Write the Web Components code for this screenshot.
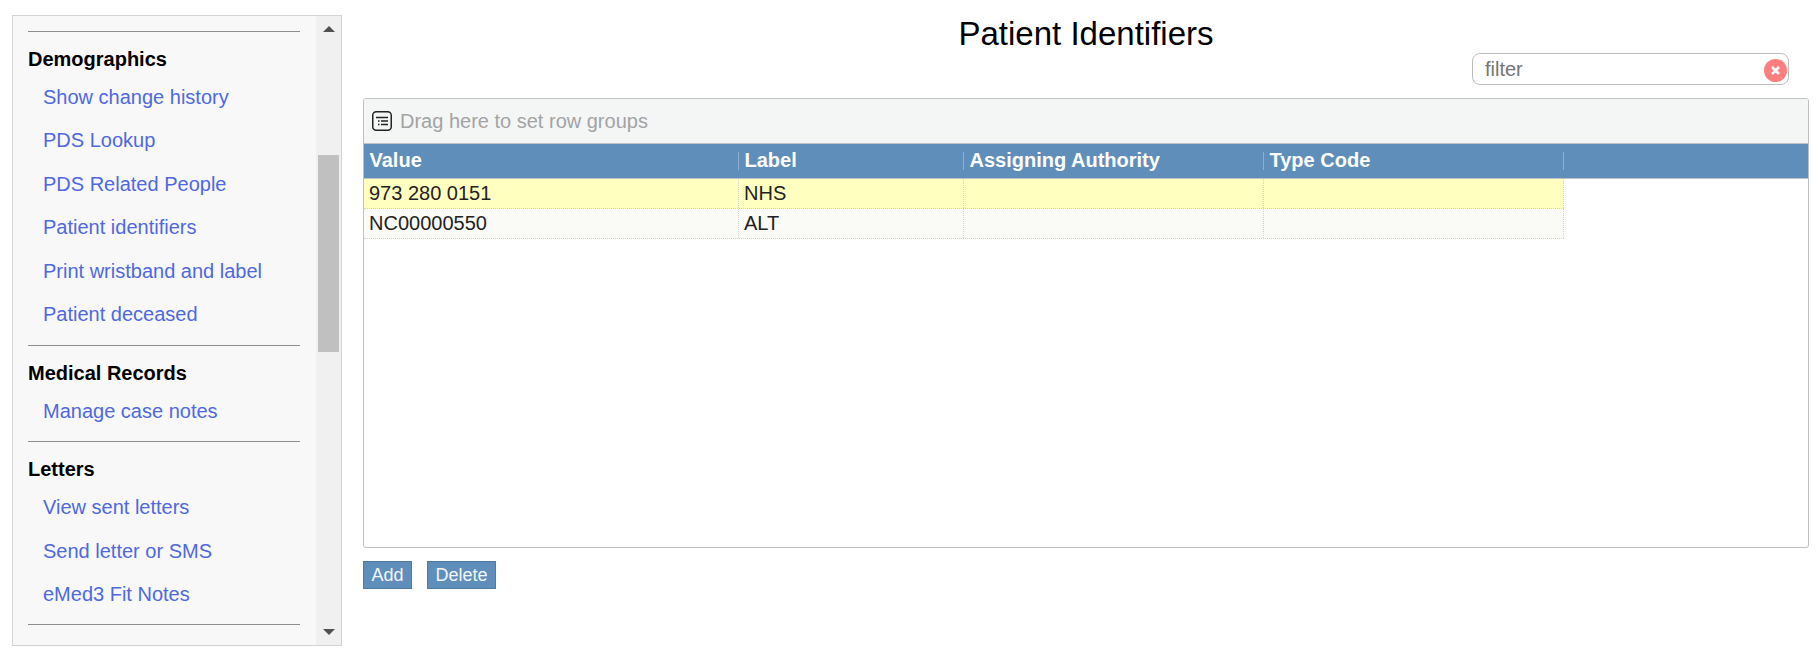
<!DOCTYPE html>
<html lang="en">
<head>
<meta charset="utf-8">
<title>Patient Identifiers</title>
<style>
  html, body { margin: 0; height: 100%; background: #fff; }
  body { font-family: "Liberation Sans", Arial, sans-serif; }
</style>
</head>
<body>

<template id="page-shell-tpl">
  <style>
    :host {
      display: flex;
      box-sizing: border-box;
      width: 1818px;
      height: 652px;
      padding: 15px 9px 6px 12px;
      gap: 21px;
      align-items: stretch;
      overflow: hidden;
    }
    main { flex: 1; min-width: 0; margin-top: -15px; display: flex; flex-direction: column; }
  </style>
  <slot name="side"></slot>
  <main><slot></slot></main>
</template>

<template id="side-menu-tpl">
  <style>
    :host {
      display: flex;
      box-sizing: border-box;
      width: 330px;
      flex: none;
      border: 1px solid #d3d3d3;
      background: #f8f8f8;
      overflow: hidden;
    }
    .items { flex: 1; min-width: 0; padding: 15px 16px 0 15px; }
    .bar {
      width: 25px;
      flex: none;
      background: #f0f0f0;
      display: flex;
      flex-direction: column;
      align-items: center;
      padding: 0 2px;
      box-sizing: border-box;
    }
    .arrow { width: 0; height: 0; border-left: 6px solid transparent; border-right: 6px solid transparent; }
    .up { border-bottom: 6px solid #505050; margin-top: 10px; }
    .thumb { align-self: stretch; height: 197px; margin-top: 123px; background: #c0c0c0; }
    .down { border-top: 6px solid #505050; margin-top: auto; margin-bottom: 10px; }
  </style>
  <div class="items"><slot></slot></div>
  <div class="bar">
    <div class="arrow up"></div>
    <div class="thumb"></div>
    <div class="arrow down"></div>
  </div>
</template>

<template id="menu-section-tpl">
  <style>
    :host { display: block; border-top: 1px solid #8e8e8e; padding: 15px 0 8.2px 0; font-size: 20px; }
    h3 { margin: 0; font: bold 20px/25px "Liberation Sans", Arial, sans-serif; color: #000; }
    .links { padding: 4px 0 0 0; display: flex; flex-direction: column; }
  </style>
  <h3></h3>
  <div class="links"><slot></slot></div>
</template>

<template id="menu-link-tpl">
  <style>
    :host {
      display: block;
      padding-left: 15px;
      height: 43.4px;
      line-height: 43.4px;
      font-size: 20px;
      color: #4f69e0;
      white-space: nowrap;
    }
  </style>
  <slot></slot>
</template>

<template id="filter-box-tpl">
  <style>
    :host {
      display: flex;
      align-items: center;
      box-sizing: border-box;
      width: 317px;
      height: 32px;
      border: 1px solid #bdbdbd;
      border-radius: 8px;
      background: #fff;
      padding: 0 1px 0 12px;
      font-size: 20px;
      color: #757575;
    }
    span { flex: 1; }
    svg { display: block; margin-top: 2px; }
  </style>
  <span>filter</span>
  <svg width="23" height="23" viewBox="0 0 23 23">
    <circle cx="11.5" cy="11.5" r="11.5" fill="#ff7f7f"/>
    <path d="M8 8l7 7M15 8l-7 7" stroke="#fff" stroke-width="2.6" fill="none"/>
  </svg>
</template>

<template id="id-grid-tpl">
  <style>
    :host {
      display: flex;
      flex-direction: column;
      box-sizing: border-box;
      height: 450px;
      border: 1px solid #bdc3c7;
      border-radius: 3px;
      background: #fff;
      font-size: 20px;
      color: #222;
      overflow: hidden;
    }
    .groups {
      display: flex;
      align-items: center;
      gap: 8px;
      flex: none;
      height: 45px;
      box-sizing: border-box;
      padding-left: 8px;
      background: #f4f6f6;
      border-bottom: 1px solid #bdc3c7;
      color: #a3a3a3;
    }
    .head, .row { display: grid; grid-template-columns: 375px 225px 300px 300px; }
    .head {
      flex: none;
      height: 35px;
      box-sizing: border-box;
      background: #608eba;
      border-bottom: 1px solid #bdc3c7;
      color: #fff;
      font-weight: bold;
      padding-top: 8px;
    }
    .head div {
      height: 18px;
      line-height: 17px;
      padding-left: 5.5px;
      border-right: 1px solid #8fb0cf;
      box-sizing: border-box;
    }
    .row { height: 30px; width: 1200px; box-sizing: border-box; border-bottom: 1px dotted #cfd4d0; }
    .row div {
      line-height: 29px;
      padding-left: 5px;
      border-right: 1px dotted #cfd4d0;
      box-sizing: border-box;
    }
    .row.odd { background: #ffffbf; }
    .row.even { background: #fafbf6; }
  </style>
  <div class="groups">
    <svg width="20" height="20" viewBox="0 0 20 20" fill="none">
      <rect x="0.75" y="0.75" width="18.5" height="18.5" rx="3.5" stroke="#222" stroke-width="1.5"/>
      <path d="M4 6.5h12M6 10h1.5M6 13.5h1.5" stroke="#222" stroke-width="1.6"/>
      <path d="M9 10h7M9 13.5h7" stroke="#222" stroke-width="1.6"/>
    </svg>
    <span>Drag here to set row groups</span>
  </div>
  <div class="head" part="head">
    <div>Value</div><div>Label</div><div>Assigning Authority</div><div>Type Code</div>
  </div>
  <div class="body"></div>
</template>

<template id="action-button-tpl">
  <style>
    :host {
      display: inline-block;
      box-sizing: border-box;
      height: 28px;
      line-height: 26px;
      padding: 0 7.5px;
      background: #608eba;
      border: 1px solid #4f7aa3;
      color: #f2f5f8;
      font-size: 18px;
    }
  </style>
  <slot></slot>
</template>

<page-shell>
  <side-menu slot="side">
    <menu-section heading="Demographics">
      <menu-link>Show change history</menu-link>
      <menu-link>PDS Lookup</menu-link>
      <menu-link>PDS Related People</menu-link>
      <menu-link>Patient identifiers</menu-link>
      <menu-link>Print wristband and label</menu-link>
      <menu-link>Patient deceased</menu-link>
    </menu-section>
    <menu-section heading="Medical Records">
      <menu-link>Manage case notes</menu-link>
    </menu-section>
    <menu-section heading="Letters">
      <menu-link>View sent letters</menu-link>
      <menu-link>Send letter or SMS</menu-link>
      <menu-link>eMed3 Fit Notes</menu-link>
    </menu-section>
    <menu-section></menu-section>
  </side-menu>

  <page-title>Patient Identifiers</page-title>
  <filter-box></filter-box>
  <id-grid></id-grid>
  <button-row>
    <action-button>Add</action-button>
    <action-button>Delete</action-button>
  </button-row>
</page-shell>

<script>
  // Simple elements that only need a template cloned into the shadow root
  function fromTemplate(id) {
    return document.getElementById(id).content.cloneNode(true);
  }

  class PageShell extends HTMLElement {
    constructor() {
      super();
      this.attachShadow({ mode: 'open' }).appendChild(fromTemplate('page-shell-tpl'));
    }
  }

  class SideMenu extends HTMLElement {
    constructor() {
      super();
      this.attachShadow({ mode: 'open' }).appendChild(fromTemplate('side-menu-tpl'));
    }
  }

  class MenuSection extends HTMLElement {
    constructor() {
      super();
      this.attachShadow({ mode: 'open' }).appendChild(fromTemplate('menu-section-tpl'));
    }

    connectedCallback() {
      this.shadowRoot.querySelector('h3').textContent = this.getAttribute('heading') || '';
    }
  }

  class MenuLink extends HTMLElement {
    constructor() {
      super();
      this.attachShadow({ mode: 'open' }).appendChild(fromTemplate('menu-link-tpl'));
    }
  }

  class PageTitle extends HTMLElement {
    constructor() {
      super();
      this.attachShadow({ mode: 'open' }).innerHTML = `
        <style>
          :host {
            display: block;
            flex: none;
            height: 53px;
            box-sizing: border-box;
            padding-top: 15px;
            text-align: center;
            font-size: 33px;
            line-height: 38px;
            color: #000;
          }
        </style>
        <slot></slot>
      `;
    }
  }

  class FilterBox extends HTMLElement {
    constructor() {
      super();
      this.attachShadow({ mode: 'open' }).appendChild(fromTemplate('filter-box-tpl'));
    }

    connectedCallback() {
      this.style.margin = '0 20px 13px auto';
      this.style.flex = 'none';
    }
  }

  class IdGrid extends HTMLElement {
    constructor() {
      super();
      this.attachShadow({ mode: 'open' }).appendChild(fromTemplate('id-grid-tpl'));
      this.rows = [
        ['973 280 0151', 'NHS', '', ''],
        ['NC00000550', 'ALT', '', '']
      ];
    }

    connectedCallback() {
      const body = this.shadowRoot.querySelector('.body');
      this.rows.forEach((row, i) => {
        const el = document.createElement('div');
        el.className = `row ${i % 2 === 0 ? 'odd' : 'even'}`;
        row.forEach(value => {
          const cell = document.createElement('div');
          cell.textContent = value;
          el.appendChild(cell);
        });
        body.appendChild(el);
      });
    }
  }

  class ButtonRow extends HTMLElement {
    constructor() {
      super();
      this.attachShadow({ mode: 'open' }).innerHTML = `
        <style>
          :host { display: flex; gap: 15px; padding-top: 13px; flex: none; }
        </style>
        <slot></slot>
      `;
    }
  }

  class ActionButton extends HTMLElement {
    constructor() {
      super();
      this.attachShadow({ mode: 'open' }).appendChild(fromTemplate('action-button-tpl'));
    }
  }

  customElements.define('page-shell', PageShell);
  customElements.define('side-menu', SideMenu);
  customElements.define('menu-section', MenuSection);
  customElements.define('menu-link', MenuLink);
  customElements.define('page-title', PageTitle);
  customElements.define('filter-box', FilterBox);
  customElements.define('id-grid', IdGrid);
  customElements.define('button-row', ButtonRow);
  customElements.define('action-button', ActionButton);
</script>
</body>
</html>
